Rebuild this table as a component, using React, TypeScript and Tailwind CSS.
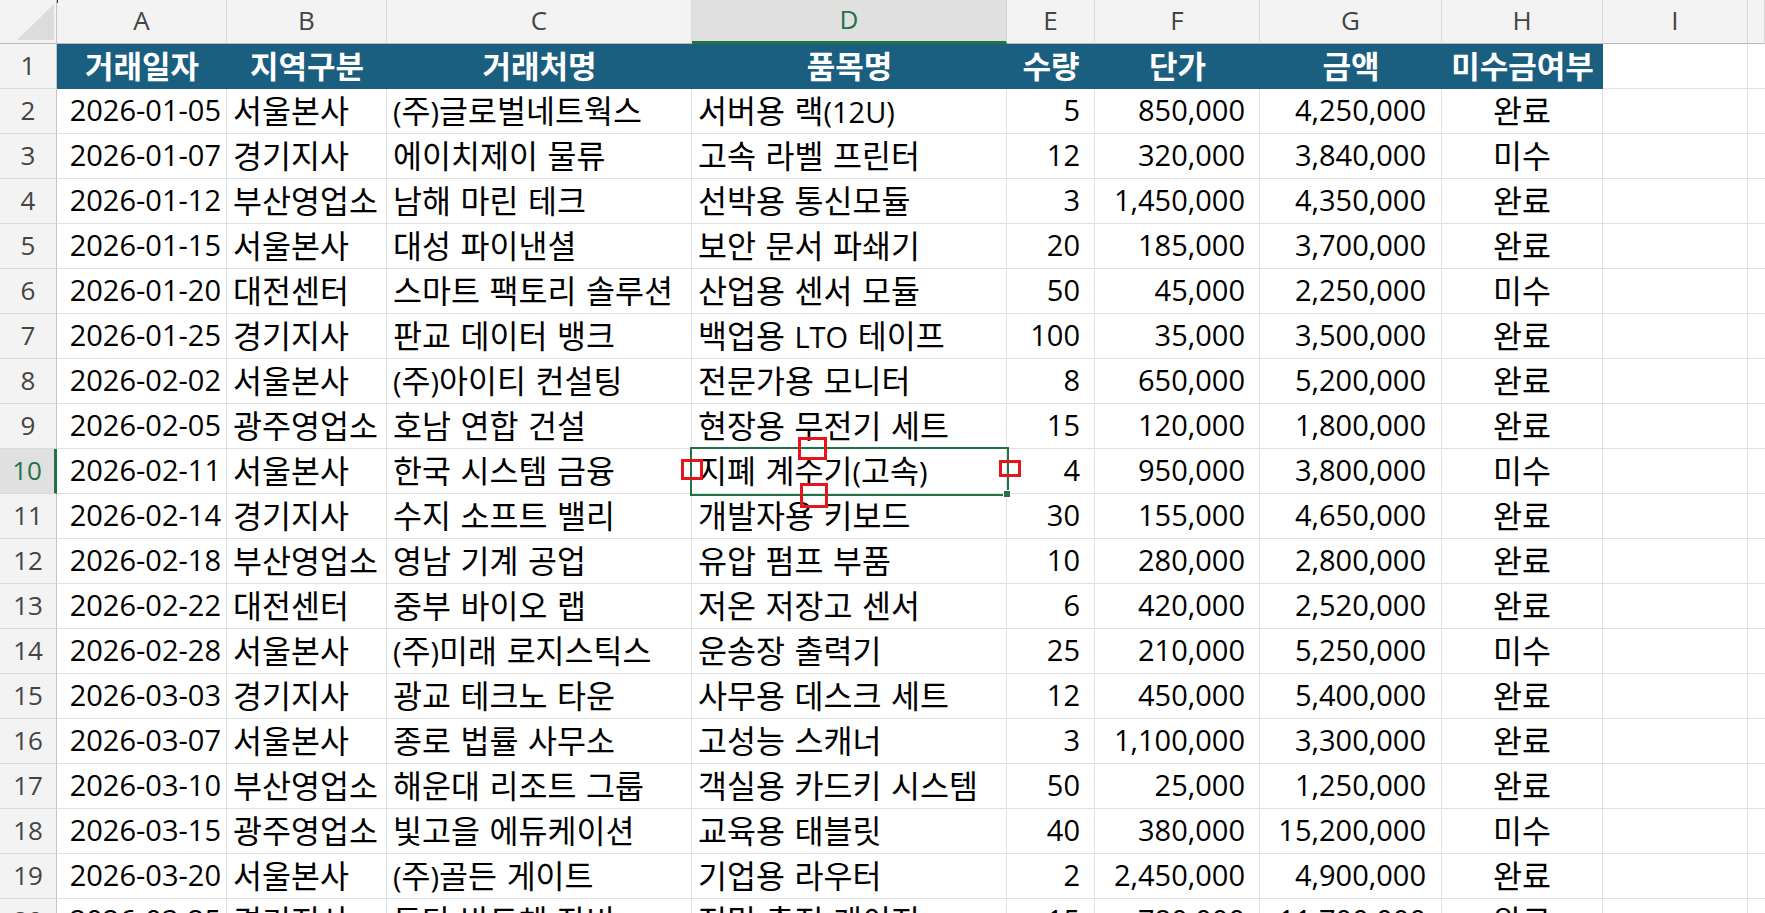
import React from 'react';

const rows: string[][] = [
  ['2026-01-05', '서울본사', '(주)글로벌네트웍스', '서버용 랙(12U)', '5', '850,000', '4,250,000', '완료'],
  ['2026-01-07', '경기지사', '에이치제이 물류', '고속 라벨 프린터', '12', '320,000', '3,840,000', '미수'],
  ['2026-01-12', '부산영업소', '남해 마린 테크', '선박용 통신모듈', '3', '1,450,000', '4,350,000', '완료'],
  ['2026-01-15', '서울본사', '대성 파이낸셜', '보안 문서 파쇄기', '20', '185,000', '3,700,000', '완료'],
  ['2026-01-20', '대전센터', '스마트 팩토리 솔루션', '산업용 센서 모듈', '50', '45,000', '2,250,000', '미수'],
  ['2026-01-25', '경기지사', '판교 데이터 뱅크', '백업용 LTO 테이프', '100', '35,000', '3,500,000', '완료'],
  ['2026-02-02', '서울본사', '(주)아이티 컨설팅', '전문가용 모니터', '8', '650,000', '5,200,000', '완료'],
  ['2026-02-05', '광주영업소', '호남 연합 건설', '현장용 무전기 세트', '15', '120,000', '1,800,000', '완료'],
  ['2026-02-11', '서울본사', '한국 시스템 금융', '지폐 계수기(고속)', '4', '950,000', '3,800,000', '미수'],
  ['2026-02-14', '경기지사', '수지 소프트 밸리', '개발자용 키보드', '30', '155,000', '4,650,000', '완료'],
  ['2026-02-18', '부산영업소', '영남 기계 공업', '유압 펌프 부품', '10', '280,000', '2,800,000', '완료'],
  ['2026-02-22', '대전센터', '중부 바이오 랩', '저온 저장고 센서', '6', '420,000', '2,520,000', '완료'],
  ['2026-02-28', '서울본사', '(주)미래 로지스틱스', '운송장 출력기', '25', '210,000', '5,250,000', '미수'],
  ['2026-03-03', '경기지사', '광교 테크노 타운', '사무용 데스크 세트', '12', '450,000', '5,400,000', '완료'],
  ['2026-03-07', '서울본사', '종로 법률 사무소', '고성능 스캐너', '3', '1,100,000', '3,300,000', '완료'],
  ['2026-03-10', '부산영업소', '해운대 리조트 그룹', '객실용 카드키 시스템', '50', '25,000', '1,250,000', '완료'],
  ['2026-03-15', '광주영업소', '빛고을 에듀케이션', '교육용 태블릿', '40', '380,000', '15,200,000', '미수'],
  ['2026-03-20', '서울본사', '(주)골든 게이트', '기업용 라우터', '2', '2,450,000', '4,900,000', '완료'],
  ['2026-03-25', '경기지사', '동탄 반도체 장비', '정밀 측정 게이지', '15', '780,000', '11,700,000', '완료'],
];

const headers = ['거래일자', '지역구분', '거래처명', '품목명', '수량', '단가', '금액', '미수금여부'];
const letters = ['A', 'B', 'C', 'D', 'E', 'F', 'G', 'H', 'I', ''];
const align = [
  'justify-end pr-[5px] pl-[4px]',
  'justify-start pl-[6px]',
  'justify-start pl-[6px]',
  'justify-start pl-[6px]',
  'justify-end pr-[14px]',
  'justify-end pr-[14px]',
  'justify-end pr-[15px]',
  'justify-center',
];

function Mixed({ text }: { text: string }) {
  const parts = text.split(/([\uAC00-\uD7A3]+)/).filter((p) => p.length > 0);
  return (
    <span className="pb-[2px] leading-[1.2]">
      {parts.map((p, i) =>
        /[\uAC00-\uD7A3]/.test(p) ? (
          <span key={i} className="text-[31.5px] font-['Noto_Sans_CJK_KR',sans-serif]">
            {p}
          </span>
        ) : (
          <span key={i} className="[word-spacing:2px]">{p}</span>
        )
      )}
    </span>
  );
}

function ColHeader({ letter, selected }: { letter: string; selected: boolean }) {
  return (
    <div
      className={
        selected
          ? 'flex items-center justify-center bg-[#e0e0e0] text-[#217346] border-r border-r-[#d4d4d4] border-b-[3px] border-b-[#217346] text-[26px] leading-[1.2]'
          : 'flex items-center justify-center bg-[#f3f3f3] text-[#444444] border-r border-r-[#dadada] border-b border-b-[#b8b8b8] text-[26px] leading-[1.2]'
      }
    >
      <span className="pb-[2px]">{letter}</span>
    </div>
  );
}

function RowHeader({ n, selected }: { n: number; selected: boolean }) {
  return (
    <div
      className={
        selected
          ? 'flex items-center justify-center bg-[#e0e0e0] text-[#217346] border-r-[3px] border-r-[#217346] border-b border-b-[#dadada] text-[26px] leading-[1.2]'
          : 'flex items-center justify-center bg-[#f3f3f3] text-[#444444] border-r border-r-[#c4c4c4] border-b border-b-[#dadada] text-[26px] leading-[1.2]'
      }
    >
      <span>{n}</span>
    </div>
  );
}

export default function App() {
  return (
    <div className="relative w-[1765px] h-[913px] overflow-hidden bg-white font-['Open_Sans','Noto_Sans_CJK_KR',sans-serif]">
      <div className="grid grid-cols-[57px_170px_160px_305px_315px_88px_165px_182px_161px_145px_1fr] grid-rows-[44px_repeat(20,45px)]">
        <div className="relative bg-[#f3f3f3] border-r border-r-[#c4c4c4] border-b border-b-[#b8b8b8]">
          <svg className="absolute left-0 top-0" width="57" height="44" viewBox="0 0 57 44">
            <polygon points="54,4 54,40 17,40" fill="#dcdcdc" />
          </svg>
        </div>
        {letters.map((l, i) => (
          <ColHeader key={'c' + i} letter={l} selected={l === 'D'} />
        ))}

        <RowHeader n={1} selected={false} />
        {headers.map((h, i) => (
          <div
            key={'h' + i}
            className="flex items-center justify-center bg-[#1b5f80] text-white font-bold text-[31px] leading-[1.2] border-b border-b-[#1b5f80] whitespace-nowrap font-['Noto_Sans_CJK_KR',sans-serif]"
          >
            <span className="pb-[3px]">{h}</span>
          </div>
        ))}
        <div className="border-r border-b border-[#e1e1e1]" />
        <div className="border-b border-[#e1e1e1]" />

        {rows.map((r, ri) => {
          const n = ri + 2;
          return (
            <React.Fragment key={'r' + n}>
              <RowHeader n={n} selected={n === 10} />
              {r.map((v, ci) => (
                <div
                  key={ci}
                  className={`flex items-center ${align[ci]} border-r border-b border-[#e1e1e1] text-black text-[29px] leading-[1.2] whitespace-nowrap overflow-visible`}
                >
                  <Mixed text={v} />
                </div>
              ))}
              <div className="border-r border-b border-[#e1e1e1]" />
              <div className="border-b border-[#e1e1e1]" />
            </React.Fragment>
          );
        })}
      </div>

      <div className="absolute left-[690px] top-[447px] w-[319px] h-[49px] border-2 border-[#217346]" />
      <div className="absolute left-[1003px] top-[490px] w-[8px] h-[8px] bg-[#217346] border border-white" />

      <div className="absolute left-[798px] top-[437px] w-[29px] h-[23px] border-[3px] border-[#e8141a]" />
      <div className="absolute left-[681px] top-[459px] w-[22px] h-[21px] border-[3px] border-[#e8141a]" />
      <div className="absolute left-[999px] top-[460px] w-[22px] h-[17px] border-[3px] border-[#e8141a]" />
      <div className="absolute left-[800px] top-[483px] w-[28px] h-[25px] border-[3px] border-[#e8141a]" />

      <div className="absolute left-[57px] top-0 w-[1px] h-[3px] bg-[#333]" />
    </div>
  );
}
